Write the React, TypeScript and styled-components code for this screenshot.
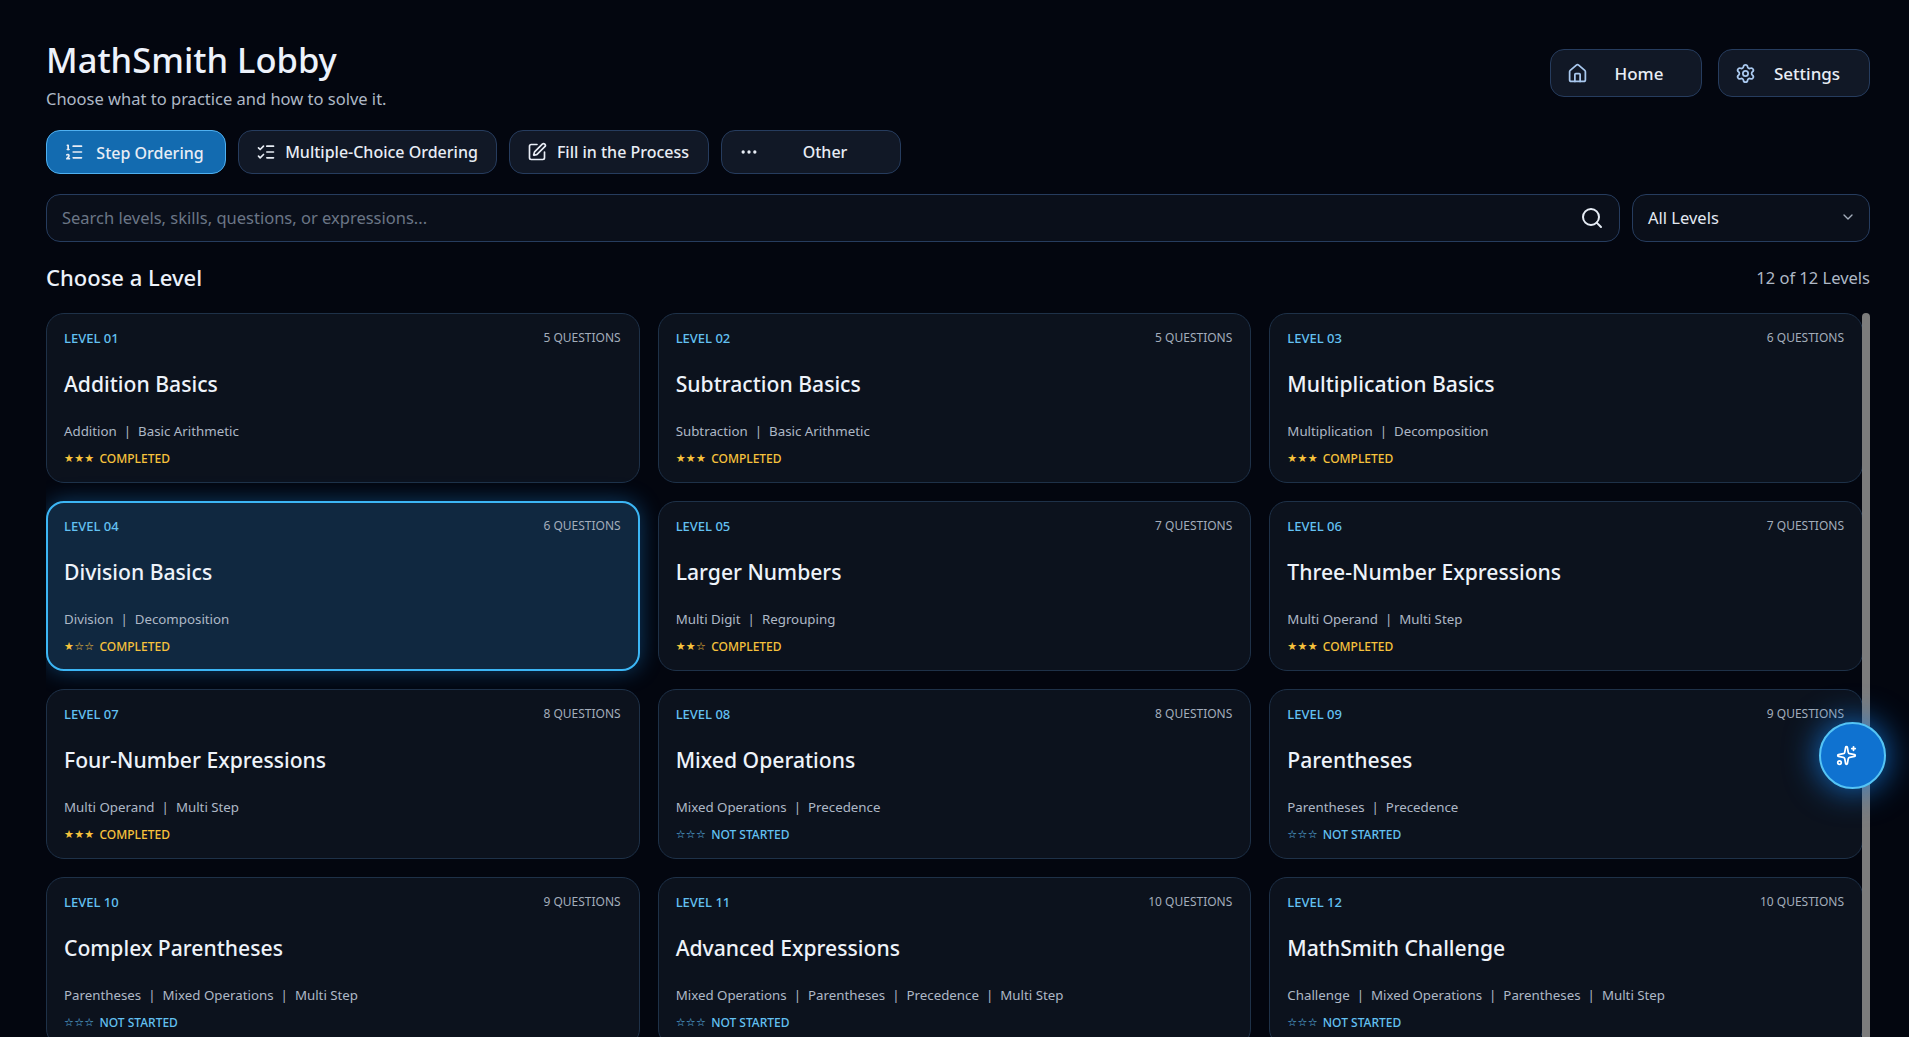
import styled, { createGlobalStyle } from 'styled-components';
import {
  ChevronDown,
  Ellipsis,
  House,
  ListChecks,
  ListOrdered,
  Search,
  Settings,
  Sparkles,
  SquarePen,
} from 'lucide-react';

const levels = [
  { id: '01', title: 'Addition Basics', count: 5, tags: ['Addition', 'Basic Arithmetic'], stars: 3, done: true },
  { id: '02', title: 'Subtraction Basics', count: 5, tags: ['Subtraction', 'Basic Arithmetic'], stars: 3, done: true },
  { id: '03', title: 'Multiplication Basics', count: 6, tags: ['Multiplication', 'Decomposition'], stars: 3, done: true },
  { id: '04', title: 'Division Basics', count: 6, tags: ['Division', 'Decomposition'], stars: 1, done: true, selected: true },
  { id: '05', title: 'Larger Numbers', count: 7, tags: ['Multi Digit', 'Regrouping'], stars: 2, done: true },
  { id: '06', title: 'Three-Number Expressions', count: 7, tags: ['Multi Operand', 'Multi Step'], stars: 3, done: true },
  { id: '07', title: 'Four-Number Expressions', count: 8, tags: ['Multi Operand', 'Multi Step'], stars: 3, done: true },
  { id: '08', title: 'Mixed Operations', count: 8, tags: ['Mixed Operations', 'Precedence'], stars: 0, done: false },
  { id: '09', title: 'Parentheses', count: 9, tags: ['Parentheses', 'Precedence'], stars: 0, done: false },
  { id: '10', title: 'Complex Parentheses', count: 9, tags: ['Parentheses', 'Mixed Operations', 'Multi Step'], stars: 0, done: false },
  { id: '11', title: 'Advanced Expressions', count: 10, tags: ['Mixed Operations', 'Parentheses', 'Precedence', 'Multi Step'], stars: 0, done: false },
  { id: '12', title: 'MathSmith Challenge', count: 10, tags: ['Challenge', 'Mixed Operations', 'Parentheses', 'Multi Step'], stars: 0, done: false },
];

const tabs = [
  { label: 'Step Ordering', icon: ListOrdered, width: 180, active: true },
  { label: 'Multiple-Choice Ordering', icon: ListChecks, width: 259 },
  { label: 'Fill in the Process', icon: SquarePen, width: 200 },
  { label: 'Other', icon: Ellipsis, width: 180 },
];

export default function App() {
  return (
    <>
      <GlobalStyle />
      <Page>
        <Header>
          <div>
            <Title>MathSmith Lobby</Title>
            <Subtitle>Choose what to practice and how to solve it.</Subtitle>
          </div>
          <HeaderActions>
            <NavButton>
              <House size={21} color="#a9c8ee" />
              <span>Home</span>
            </NavButton>
            <NavButton>
              <Settings size={21} color="#a9c8ee" />
              <span>Settings</span>
            </NavButton>
          </HeaderActions>
        </Header>

        <TabRow>
          {tabs.map((tab) => (
            <Tab key={tab.label} $active={tab.active} $width={tab.width}>
              <tab.icon size={20} />
              <span>{tab.label}</span>
            </Tab>
          ))}
        </TabRow>

        <SearchRow>
          <SearchBox>
            <SearchInput placeholder="Search levels, skills, questions, or expressions..." />
            <Search size={24} color="#e6ecf5" />
          </SearchBox>
          <LevelSelect>
            <span>All Levels</span>
            <ChevronDown size={16} color="#a3adbb" />
          </LevelSelect>
        </SearchRow>

        <SectionHead>
          <SectionTitle>Choose a Level</SectionTitle>
          <LevelCount>12 of 12 Levels</LevelCount>
        </SectionHead>

        <LevelPanel>
          <LevelGrid>
            {levels.map((level) => (
              <LevelCard key={level.id} $selected={level.selected}>
                <CardTop>
                  <LevelTag>LEVEL {level.id}</LevelTag>
                  <QuestionCount>{level.count} QUESTIONS</QuestionCount>
                </CardTop>
                <CardTitle>{level.title}</CardTitle>
                <TagRow>
                  {level.tags.map((tag, i) => (
                    <span key={tag}>
                      {i > 0 && <TagDivider>|</TagDivider>}
                      {tag}
                    </span>
                  ))}
                </TagRow>
                <StatusRow $done={level.done}>
                  <Stars>{'★'.repeat(level.stars) + '☆'.repeat(3 - level.stars)}</Stars>
                  <span>{level.done ? 'COMPLETED' : 'NOT STARTED'}</span>
                </StatusRow>
              </LevelCard>
            ))}
          </LevelGrid>
          <ScrollThumb />
        </LevelPanel>

        <HelperButton>
          <Sparkles size={21} />
        </HelperButton>
      </Page>
    </>
  );
}

const GlobalStyle = createGlobalStyle`
  html, body {
    margin: 0;
    height: 100%;
    overflow: hidden;
    background: #03060f;
  }
  * {
    box-sizing: border-box;
  }
  body, input, button {
    font-family: 'Noto Sans', sans-serif;
  }
`;

const Page = styled.div`
  position: relative;
  height: 1037px;
  padding: 40px 39px 0 46px;
  display: flex;
  flex-flow: column;
  overflow: hidden;
  background: #03060f;
  color: #eef3fa;
`;

const Header = styled.header`
  display: flex;
  justify-content: space-between;
  align-items: flex-start;
  height: 90px;
`;

const Title = styled.h1`
  margin: -1px 0 0;
  font-size: 34.5px;
  line-height: 41px;
  font-weight: 500;
  color: #edf2fb;
`;

const Subtitle = styled.p`
  margin: 8px 0 0;
  font-size: 16.5px;
  line-height: 22px;
  color: #aeb8c6;
`;

const HeaderActions = styled.div`
  display: flex;
  gap: 16px;
  margin-top: 9px;
`;

const NavButton = styled.button`
  width: 152px;
  height: 48px;
  padding: 0 16px;
  display: flex;
  align-items: center;
  gap: 5px;
  background: #111826;
  border: 1px solid #263c5e;
  border-radius: 14px;
  color: #e8edf5;
  font-size: 17px;
  font-weight: 500;

  span {
    flex: 1;
    text-align: center;
  }
`;

const TabRow = styled.nav`
  display: flex;
  gap: 12px;
`;

const Tab = styled.button<{ $active?: boolean; $width: number }>`
  width: ${(props) => props.$width}px;
  height: 44px;
  padding: 0 17px;
  display: flex;
  align-items: center;
  gap: 8px;
  background: ${(props) => (props.$active ? '#136bb0' : '#111826')};
  border: 1px solid ${(props) => (props.$active ? '#4fb0f0' : '#263c5e')};
  border-radius: 14px;
  color: #e8edf5;
  font-size: 16px;
  font-weight: 500;

  span {
    flex: 1;
    text-align: center;
    white-space: nowrap;
    padding-top: ${(props) => (props.$active ? '2px' : '0')};
  }
`;

const SearchRow = styled.div`
  display: flex;
  gap: 12px;
  margin-top: 20px;
`;

const SearchBox = styled.div`
  flex: 1;
  height: 48px;
  padding: 0 15px 0 14px;
  display: flex;
  align-items: center;
  background: #0a0f1a;
  border: 1px solid #263c5e;
  border-radius: 14px;
`;

const SearchInput = styled.input`
  flex: 1;
  padding: 0 2px 2px 1px;
  background: none;
  border: none;
  outline: none;
  color: #e8edf5;
  font-size: 16.5px;

  &::placeholder {
    color: #6b7686;
    opacity: 1;
  }
`;

const LevelSelect = styled.div`
  width: 238px;
  height: 48px;
  padding: 0 13px 2px 15px;
  display: flex;
  align-items: center;
  justify-content: space-between;
  background: #0a0f1a;
  border: 1px solid #263c5e;
  border-radius: 14px;
  color: #e3e9f2;
  font-size: 16.5px;
`;

const SectionHead = styled.div`
  display: flex;
  justify-content: space-between;
  align-items: center;
  height: 30px;
  margin-top: 21px;
  margin-bottom: 20px;
`;

const SectionTitle = styled.h2`
  margin: 0;
  padding-bottom: 2px;
  font-size: 22px;
  font-weight: 500;
  color: #edf2fb;
`;

const LevelCount = styled.span`
  padding-bottom: 2px;
  font-size: 16.5px;
  color: #aeb8c6;
`;

const LevelPanel = styled.div`
  position: relative;
  flex: 1;
  min-height: 0;
`;

const LevelGrid = styled.div`
  height: 100%;
  padding-right: 7px;
  display: grid;
  grid-template-columns: repeat(3, 1fr);
  grid-auto-rows: 170px;
  gap: 18px;
  overflow: hidden;
`;

const ScrollThumb = styled.div`
  position: absolute;
  top: 0;
  right: 0;
  bottom: -8px;
  width: 8px;
  background: #7c7c7c;
  border-radius: 4px;
`;

const LevelCard = styled.article<{ $selected?: boolean }>`
  padding: ${(props) => (props.$selected ? '12px 17px 0 16px' : '13px 18px 0 17px')};
  display: flex;
  flex-flow: column;
  background: ${(props) => (props.$selected ? '#102840' : '#0c121d')};
  border: ${(props) => (props.$selected ? '2px solid #3cb6f5' : '1px solid #1e3148')};
  border-radius: 18px;
  box-shadow: ${(props) => (props.$selected ? '0 0 22px rgba(30, 140, 230, 0.4)' : 'none')};
`;

const CardTop = styled.div`
  display: flex;
  justify-content: space-between;
  align-items: flex-start;
  height: 22px;
`;

const LevelTag = styled.span`
  font-size: 13px;
  line-height: 22px;
  font-weight: 500;
  color: #63c1f2;
`;

const QuestionCount = styled.span`
  font-size: 12px;
  line-height: 22px;
  color: #a3adbb;
`;

const CardTitle = styled.h3`
  margin: 19px 0 0;
  font-size: 21.15px;
  line-height: 32px;
  font-weight: 500;
  color: #eef3fa;
`;

const TagRow = styled.div`
  margin-top: 21px;
  font-size: 13.3px;
  line-height: 20px;
  color: #aeb8c6;
`;

const TagDivider = styled.span`
  margin: 0 7px;
`;

const StatusRow = styled.div<{ $done?: boolean }>`
  margin-top: 8px;
  display: flex;
  align-items: center;
  gap: 5px;
  font-size: 12px;
  line-height: 20px;
  font-weight: 500;
  color: ${(props) => (props.$done ? '#f7c23c' : '#63c1f2')};
`;

const Stars = styled.span`
  font-family: 'DejaVu Sans', sans-serif;
  font-size: 11px;
  letter-spacing: 0.3px;
`;

const HelperButton = styled.button`
  position: absolute;
  left: 1819px;
  top: 722px;
  width: 67px;
  height: 67px;
  padding: 0 13px 0 0;
  display: flex;
  align-items: center;
  justify-content: center;
  background: #0f72d0;
  border: 2px solid #55c4f5;
  border-radius: 50%;
  color: #fff;
  box-shadow: 0 0 34px rgba(20, 130, 240, 0.85);
`;
